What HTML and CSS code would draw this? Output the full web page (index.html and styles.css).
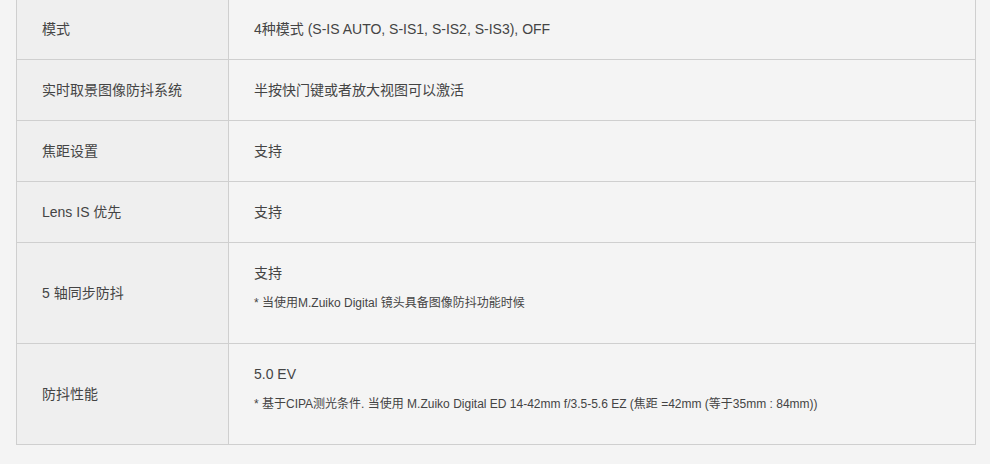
FILE: index.html
```html
<!DOCTYPE html>
<html lang="zh-CN">
<head>
<meta charset="utf-8">
<link rel="stylesheet" href="styles.css">
</head>
<body>
<table class="spec">
  <colgroup><col class="c1"><col class="c2"></colgroup>
  <tbody>
    <tr><th>模式</th><td><p class="val">4种模式 (S-IS AUTO, S-IS1, S-IS2, S-IS3), OFF</p></td></tr>
    <tr><th>实时取景图像防抖系统</th><td><p class="val">半按快门键或者放大视图可以激活</p></td></tr>
    <tr><th>焦距设置</th><td><p class="val">支持</p></td></tr>
    <tr><th>Lens IS 优先</th><td><p class="val">支持</p></td></tr>
    <tr><th>5 轴同步防抖</th><td class="tall"><p class="val">支持</p><p class="note">* 当使用M.Zuiko Digital 镜头具备图像防抖功能时候</p></td></tr>
    <tr><th>防抖性能</th><td class="tall"><p class="val">5.0 EV</p><p class="note">* 基于CIPA测光条件. 当使用 M.Zuiko Digital ED 14-42mm f/3.5-5.6 EZ (焦距 =42mm (等于35mm : 84mm))</p></td></tr>
  </tbody>
</table>
</body>
</html>
```
FILE: styles.css
```css
html, body {
  margin: 0;
  background: #f4f4f4;
}
body {
  padding: 0 0 0 16px;
  font-family: "Liberation Sans", "Noto Sans CJK SC", sans-serif;
  color: #444;
}
.spec {
  width: 960px;
  margin-top: -2px;
  border-collapse: collapse;
  table-layout: fixed;
}
.spec .c1 { width: 212px; }
.spec th, .spec td {
  border: 1px solid #cfcfcf;
  padding: 20px 25px;
  font-size: 14px;
  line-height: 20px;
  text-align: left;
  vertical-align: middle;
  font-weight: normal;
}
.spec th {
  background: #efefef;
  color: #444;
}
.spec td { background: #f4f4f4; }
.spec td.tall { vertical-align: top; padding-bottom: 30px; }
.val { margin: 0; }
.note {
  margin: 10px 0 0;
  font-size: 12px;
  line-height: 20px;
}
```
